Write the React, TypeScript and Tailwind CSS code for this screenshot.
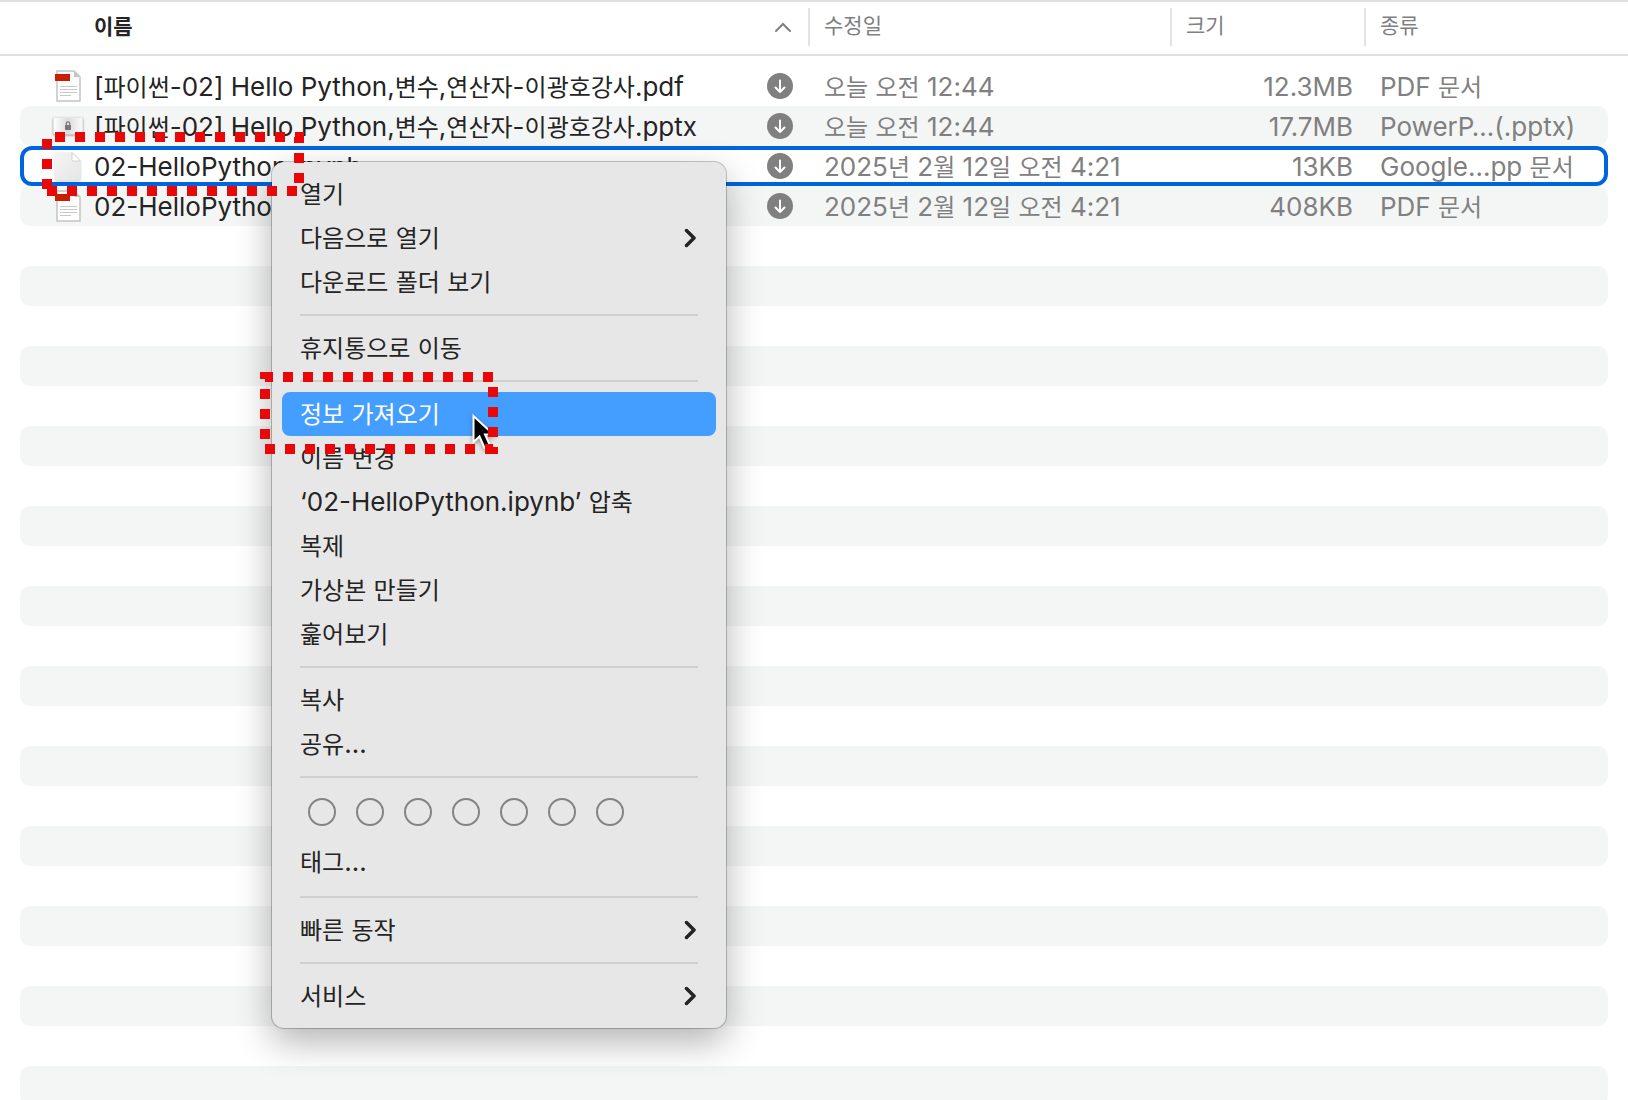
import React from "react";

const NAME_FONT = "font-[Inter,'Noto_Sans_CJK_KR',sans-serif]";

type FileKind = "pdf" | "pptx" | "blank";

interface FileRow {
  kind: FileKind;
  name: string;
  modified: string;
  size: string;
  type: string;
  selected?: boolean;
}

const files: FileRow[] = [
  {
    kind: "pdf",
    name: "[파이썬-02] Hello Python,변수,연산자-이광호강사.pdf",
    modified: "오늘 오전 12:44",
    size: "12.3MB",
    type: "PDF 문서",
  },
  {
    kind: "pptx",
    name: "[파이썬-02] Hello Python,변수,연산자-이광호강사.pptx",
    modified: "오늘 오전 12:44",
    size: "17.7MB",
    type: "PowerP…(.pptx)",
  },
  {
    kind: "blank",
    name: "02-HelloPython.ipynb",
    modified: "2025년 2월 12일 오전 4:21",
    size: "13KB",
    type: "Google…pp 문서",
    selected: true,
  },
  {
    kind: "pdf",
    name: "02-HelloPython.pdf",
    modified: "2025년 2월 12일 오전 4:21",
    size: "408KB",
    type: "PDF 문서",
  },
];

const emptyRows = Array.from({ length: 22 }, (_, i) => i);

/* Hangul runs are set a little smaller than the Latin ones beside them. */
function Mixed({ text }: { text: string }) {
  const runs = text.split(/([가-힣]+)/).filter(Boolean);
  return (
    <span className="text-[26px] whitespace-pre">
      {runs.map((run, i) =>
        /[가-힣]/.test(run) ? (
          <span key={i} className="text-[24px]">
            {run}
          </span>
        ) : (
          run
        ),
      )}
    </span>
  );
}

function FileIcon({ kind }: { kind: FileKind }) {
  if (kind === "pptx") {
    return (
      <svg viewBox="0 0 32 32" className="size-8 shrink-0 drop-shadow-[0_1px_1px_rgba(0,0,0,0.4)]" aria-hidden="true">
        <defs>
          <linearGradient id="slide" x1="0" y1="0" x2="1" y2="0">
            <stop offset="0" stopColor="#fff" />
            <stop offset="0.5" stopColor="#dcdcdc" />
            <stop offset="1" stopColor="#fafafa" />
          </linearGradient>
        </defs>
        <rect x="1.500" y="7.500" width="29" height="16.500" rx="1" fill="url(#slide)" stroke="#e4e4e4" strokeWidth="1" />
        <rect x="13" y="15" width="6" height="5" rx="0.800" fill="#777" />
        <path d="M14.200 15.500v-1.800a1.800 1.800 0 0 1 3.600 0v1.800" fill="none" stroke="#777" strokeWidth="1.200" />
      </svg>
    );
  }
  if (kind === "blank") {
    return (
      <svg viewBox="0 0 32 32" className="size-8 shrink-0 drop-shadow-[0_1px_1px_rgba(0,0,0,0.2)]" aria-hidden="true">
        <defs>
          <linearGradient id="page" x1="0" y1="0" x2="1" y2="1">
            <stop offset="0" stopColor="#f4f4f4" />
            <stop offset="1" stopColor="#e6e6e6" />
          </linearGradient>
        </defs>
        <path d="M5 2.500H20l8.500 8.500v17.500a2 2 0 0 1-2 2H5a2 2 0 0 1-2-2v-24a2 2 0 0 1 2-2z" fill="url(#page)" />
        <path d="M20 2.500v7a1.500 1.500 0 0 0 1.500 1.500H28.500z" fill="#fff" stroke="#c8c8c8" strokeWidth="0.800" />
      </svg>
    );
  }
  return (
    <svg viewBox="0 0 32 32" className="size-8 shrink-0" aria-hidden="true">
      <path d="M5 1h17l6 6v24H5z" fill="#fff" stroke="#c4c4c4" strokeWidth="1.500" />
      <path d="M22 1v6h6z" fill="#c4c4c4" />
      <path d="M8 16.500h17M8 19.500h17M8 22.500h17M8 25.500h11" stroke="#c8c8c8" strokeWidth="1" />
      <rect x="3" y="4" width="15" height="7" fill="#c91e00" />
    </svg>
  );
}

function DownloadIcon() {
  return (
    <svg viewBox="0 0 26 26" className="size-[26px]" aria-hidden="true">
      <circle cx="13" cy="13" r="13" fill="#808080" />
      <path d="M13 7.500v11.500M8.500 14.500l4.500 4.500 4.500-4.500" fill="none" stroke="#fff" strokeWidth="2" strokeLinecap="round" strokeLinejoin="round" />
    </svg>
  );
}

function Chevron() {
  return (
    <svg viewBox="0 0 12 20" className="h-5 w-3" aria-hidden="true">
      <path d="M2.500 2.500l7.500 7.500-7.500 7.500" fill="none" stroke="#242424" strokeWidth="3.500" strokeLinecap="round" strokeLinejoin="round" />
    </svg>
  );
}

function MenuItem({ label, submenu, active }: { label: string; submenu?: boolean; active?: boolean }) {
  return (
    <button
      type="button"
      role="menuitem"
      className={
        active
          ? "flex h-11 w-full items-center justify-between rounded-lg bg-[#449eff] pr-5 pl-[18px] text-left text-white"
          : "flex h-11 w-full items-center justify-between rounded-lg pr-5 pl-[18px] text-left"
      }
    >
      <span className="pb-0.5">
        <Mixed text={label} />
      </span>
      {submenu && <Chevron />}
    </button>
  );
}

function Separator() {
  return <hr className="mx-[18px] my-2.5 border-t-2 border-[#cfcfcf]" />;
}

function ContextMenu() {
  return (
    <div
      role="menu"
      className="absolute top-[162px] left-[272px] w-[454px] rounded-xl bg-[#e7e7e7] p-2.5 text-[#242424] shadow-[0_0_0_1px_rgba(0,0,0,0.22),0_14px_36px_rgba(0,0,0,0.3)]"
    >
      <MenuItem label="열기" />
      <MenuItem label="다음으로 열기" submenu />
      <MenuItem label="다운로드 폴더 보기" />
      <Separator />
      <MenuItem label="휴지통으로 이동" />
      <Separator />
      <MenuItem label="정보 가져오기" active />
      <MenuItem label="이름 변경" />
      <MenuItem label="‘02-HelloPython.ipynb’ 압축" />
      <MenuItem label="복제" />
      <MenuItem label="가상본 만들기" />
      <MenuItem label="훑어보기" />
      <Separator />
      <MenuItem label="복사" />
      <MenuItem label="공유…" />
      <Separator />
      <div className="flex gap-5 px-[26px] pt-2.5 pb-3.5">
        {["빨간색", "주황색", "노란색", "초록색", "파란색", "보라색", "회색"].map((tag) => (
          <button key={tag} type="button" aria-label={tag} className="size-7 rounded-full border-2 border-[#848484]" />
        ))}
      </div>
      <MenuItem label="태그…" />
      <hr className="mx-[18px] mt-3 mb-2.5 border-t-2 border-[#cfcfcf]" />
      <MenuItem label="빠른 동작" submenu />
      <Separator />
      <MenuItem label="서비스" submenu />
    </div>
  );
}

function Pointer() {
  return (
    <svg viewBox="0 0 30 44" className="absolute top-[410px] left-[470px] h-11 w-[30px] drop-shadow-[0_2px_2px_rgba(0,0,0,0.35)]" aria-hidden="true">
      <path d="M3.500 6V32l6-5.500 5 11.500 5.500-2.500-5-11h8.500z" fill="#000" stroke="#fff" strokeWidth="2" strokeLinejoin="miter" />
    </svg>
  );
}

/* Dotted red frames that call out the file and the command. */
function Callouts() {
  return (
    <svg className="pointer-events-none absolute top-0 left-0 h-[480px] w-[520px]" viewBox="0 0 520 480" aria-hidden="true">
      <g fill="none" stroke="#ea0707" strokeWidth="10" strokeDasharray="10">
        <path d="M47 189V137H299V191H47" />
        <path d="M265 439V377H493V449H265" />
      </g>
    </svg>
  );
}

const headCell = "my-1.5 flex h-[38px] items-center border-l-2 border-[#e3e3e3] pb-0.5 pl-3.5 text-left font-normal";

export default function App() {
  return (
    <main className={`relative h-screen overflow-hidden bg-white text-[#242424] ${NAME_FONT}`}>
      <table className="block w-full">
        <thead className="block">
          <tr className="grid h-14 grid-cols-[minmax(0,1fr)_362px_194px_264px] border-y-2 border-[#e0e0e0] text-[21px] text-[#808080]">
            <th scope="col" aria-sort="ascending" className="flex items-center justify-between pr-4 pb-0.5 pl-[94px] text-left font-bold text-[#242424]">
              이름
              <svg viewBox="0 0 18 12" className="h-3 w-[18px]" aria-hidden="true">
                <path d="M2 10l7-7 7 7" fill="none" stroke="#808080" strokeWidth="2" strokeLinecap="round" />
              </svg>
            </th>
            <th scope="col" className={headCell}>수정일</th>
            <th scope="col" className={headCell}>크기</th>
            <th scope="col" className={headCell}>종류</th>
          </tr>
        </thead>
        <tbody className="block px-5 pt-2.5">
          {files.map((file) => (
            <tr
              key={file.name}
              className={
                file.selected
                  ? "grid h-10 grid-cols-[minmax(0,1fr)_362px_194px_244px] rounded-[12px] text-[#808080] inset-ring-4 inset-ring-[#0064e1]"
                  : "grid h-10 grid-cols-[minmax(0,1fr)_362px_194px_244px] rounded-[10px] text-[#808080] even:bg-[#f4f5f5]"
              }
            >
              <td className="flex items-center pr-[15px] pl-8 text-[#242424]">
                <FileIcon kind={file.kind} />
                <span className="min-w-0 flex-1 pl-2.5">
                  <Mixed text={file.name} />
                </span>
                <DownloadIcon />
              </td>
              <td className="flex items-center pl-4">
                <Mixed text={file.modified} />
              </td>
              <td className="flex items-center justify-end pr-[11px]">
                <Mixed text={file.size} />
              </td>
              <td className="flex items-center pl-4">
                <Mixed text={file.type} />
              </td>
            </tr>
          ))}
          {emptyRows.map((i) => (
            <tr key={i} className="block h-10 rounded-[10px] even:bg-[#f4f5f5]">
              <td />
            </tr>
          ))}
        </tbody>
      </table>
      <ContextMenu />
      <Pointer />
      <Callouts />
    </main>
  );
}
